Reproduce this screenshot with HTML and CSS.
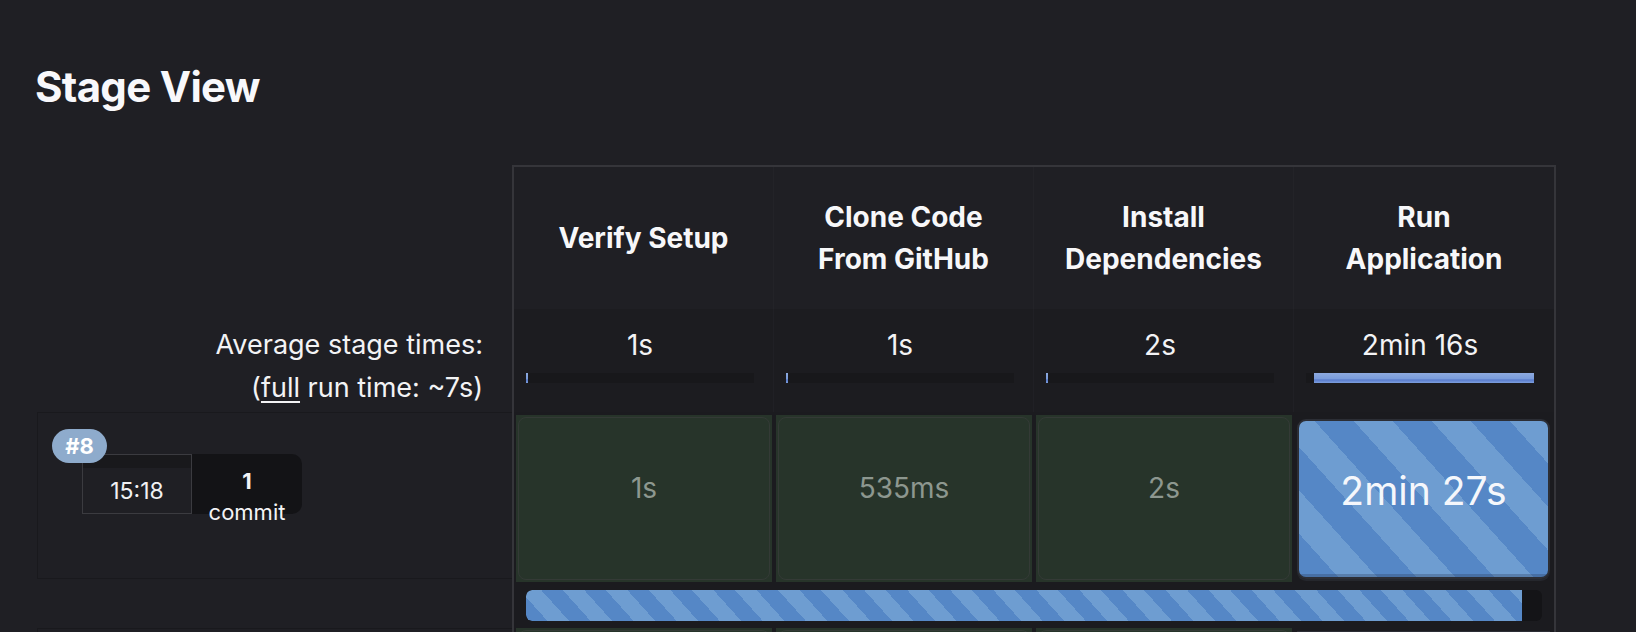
FILE: index.html
```html
<!DOCTYPE html>
<html lang="en">
<head>
<meta charset="utf-8">
<title>Stage View</title>
<link rel="stylesheet" href="styles.css">
</head>
<body>
<main class="page">
  <h1 class="title">Stage View</h1>
  <div class="stage-view">
    <div class="left">
      <div class="left-head"></div>
      <div class="avg-label">Average stage times:<br>(<u>full</u> run time: ~7s)</div>
      <div class="build-row">
        <span class="badge">#8</span>
        <div class="build-meta">
          <div class="time"><div class="time-strip"></div><div class="time-text">15:18</div></div>
          <div class="changes"><b>1</b><span>commit</span></div>
        </div>
      </div>
      <div class="left-gap"></div>
      <div class="build-row next"></div>
    </div>
    <div class="table">
      <div class="head-row">
        <div class="head-cell">Verify Setup</div>
        <div class="head-cell">Clone Code<br>From GitHub</div>
        <div class="head-cell">Install<br>Dependencies</div>
        <div class="head-cell">Run<br>Application</div>
      </div>
      <div class="avg-row">
        <div class="avg-cell"><div class="avg-value">1s</div><div class="track"><div class="fill tiny"></div></div></div>
        <div class="avg-cell"><div class="avg-value">1s</div><div class="track"><div class="fill tiny"></div></div></div>
        <div class="avg-cell"><div class="avg-value">2s</div><div class="track"><div class="fill tiny"></div></div></div>
        <div class="avg-cell"><div class="avg-value">2min 16s</div><div class="track long"><div class="fill"></div></div></div>
      </div>
      <div class="stage-row">
        <div class="stage-cell ok"><div class="ok-inner">1s</div></div>
        <div class="stage-cell ok"><div class="ok-inner">535ms</div></div>
        <div class="stage-cell ok"><div class="ok-inner">2s</div></div>
        <div class="stage-cell running"><div class="run-inner">2min 27s</div></div>
      </div>
      <div class="progress-row">
        <div class="progress"><div class="progress-fill" style="width: 98%"></div></div>
      </div>
      <div class="stage-row next">
        <div class="stage-cell ok"><div class="ok-inner"></div></div>
        <div class="stage-cell ok"><div class="ok-inner"></div></div>
        <div class="stage-cell ok"><div class="ok-inner"></div></div>
        <div class="stage-cell pending"></div>
      </div>
    </div>
  </div>
</main>
</body>
</html>
```
FILE: styles.css
```css
* { box-sizing: border-box; margin: 0; padding: 0; }

html, body {
  background: #1f1f24;
  color: #f6f6f8;
  font-family: Inter, "Noto Sans", "Liberation Sans", sans-serif;
}

body {
  width: 1636px;
  height: 632px;
  overflow: hidden;
}

.page { padding-top: 62px; }

.title {
  margin-left: 35px;
  font-size: 42px;
  font-weight: 700;
  line-height: 50px;
  letter-spacing: -0.7px;
  color: #f8f8fb;
}

.stage-view {
  display: flex;
  margin-top: 53px;
  padding-left: 37px;
}

/* left column */
.left { width: 475px; flex: none; }
.left-head { height: 144px; }

.avg-label {
  height: 103px;
  padding: 14px 29px 0 0;
  text-align: right;
  font-size: 27px;
  line-height: 43px;
  color: #f3f3f5;
}
.avg-label u { text-underline-offset: 4px; text-decoration-thickness: 2px; }

.build-row {
  position: relative;
  height: 167px;
  border: 1px solid #19191d;
  border-right: none;
  padding: 41px 0 0 44px;
}
.build-row.next { height: 4px; padding: 0; border-bottom: none; }
.left-gap { height: 49px; }

.badge {
  position: absolute;
  left: 14px;
  top: 16px;
  z-index: 2;
  width: 55px;
  height: 34px;
  border-radius: 17px;
  background: #8eabcc;
  color: #ffffff;
  font-size: 22px;
  font-weight: 700;
  line-height: 34px;
  text-align: center;
}

.build-meta { display: flex; }

.time {
  width: 110px;
  height: 60px;
  border: 1px solid #3b3b40;
  display: flex;
  flex-direction: column;
}
.time-strip { height: 13px; background: #19191c; }
.time-text {
  flex: 1;
  display: flex;
  align-items: center;
  justify-content: center;
  font-size: 23px;
  color: #f1f1f3;
}

.changes {
  width: 110px;
  height: 60px;
  background: #131316;
  border-radius: 0 10px 10px 0;
  display: flex;
  flex-direction: column;
  align-items: center;
  padding-top: 12px;
  font-size: 22px;
  line-height: 31px;
  color: #f4f4f6;
}
.changes b { font-weight: 700; }

/* stage table */
.table {
  width: 1044px;
  flex: none;
  border: 2px solid #35353a;
  border-bottom: none;
}

.head-row, .avg-row, .stage-row {
  display: grid;
  grid-template-columns: repeat(4, 260px);
}

.head-row { height: 142px; }
.head-cell {
  display: flex;
  align-items: center;
  justify-content: center;
  text-align: center;
  font-size: 28px;
  font-weight: 700;
  line-height: 42px;
  border-right: 1px solid #232328;
  color: #f7f7f9;
}
.head-cell:last-child { border-right: none; }

.avg-row { height: 103px; background: #1c1c20; }
.avg-cell {
  padding: 18px 0 0 12px;
  border-right: 1px solid #202025;
}
.avg-cell:last-child { border-right: none; }
.avg-value {
  width: 228px;
  text-align: center;
  font-size: 28px;
  line-height: 36px;
  color: #f3f3f5;
}
.track {
  margin-top: 10px;
  width: 228px;
  height: 10px;
  background: #18181b;
}
.track.long { padding-left: 8px; }
.fill {
  height: 100%;
  background: linear-gradient(#8eaadf 0%, #7b9ddb 55%, #5a7ccc 70%, #7d9fde 100%);
}
.fill.tiny { width: 2px; }

.stage-row {
  height: 170px;
  padding-top: 3px;
  background: #1b1b1f;
}
.stage-cell { margin: 0 2px; height: 167px; }
.stage-cell.ok { background: #27342a; padding: 2px; }
.ok-inner {
  height: 100%;
  border: 1.5px solid #343a36;
  border-radius: 8px;
  display: flex;
  align-items: center;
  justify-content: center;
  padding-bottom: 22px;
  font-size: 28px;
  color: #8d978f;
}

.stage-cell.running {
  margin: 4px 4px 3px 3px;
  height: 160px;
  border-radius: 9px;
  border: 2px solid #2c2e35;
  box-shadow: 0 2px 0 #25272d;
  overflow: hidden;
}
.run-inner {
  height: 100%;
  display: flex;
  align-items: center;
  justify-content: center;
  padding-bottom: 18px;
  font-size: 39px;
  color: #f5f7fb;
  background: repeating-linear-gradient(48deg, #5587c6 0 29px, #6e9dd1 29px 58px);
  box-shadow: inset 0 -3px 0 rgba(40, 55, 85, 0.3);
}

.progress-row {
  height: 46px;
  padding: 8px 12px 0;
  background: #1b1b1f;
}
.progress {
  height: 31px;
  border-radius: 6px;
  background: #141417;
  overflow: hidden;
}
.progress-fill {
  height: 100%;
  border-radius: 6px 0 0 6px;
  background: repeating-linear-gradient(48deg, #5587c6 0 16px, #6e9dd1 16px 32px);
}

.stage-row.next { height: 4px; padding-top: 0; }
.stage-row.next .stage-cell { height: 4px; }
.stage-cell.pending {
  margin: 3px 4px 0 3px;
  height: 1px;
  border-top: 1px solid #2c2e35;
  background: #1e1f24;
}
```
